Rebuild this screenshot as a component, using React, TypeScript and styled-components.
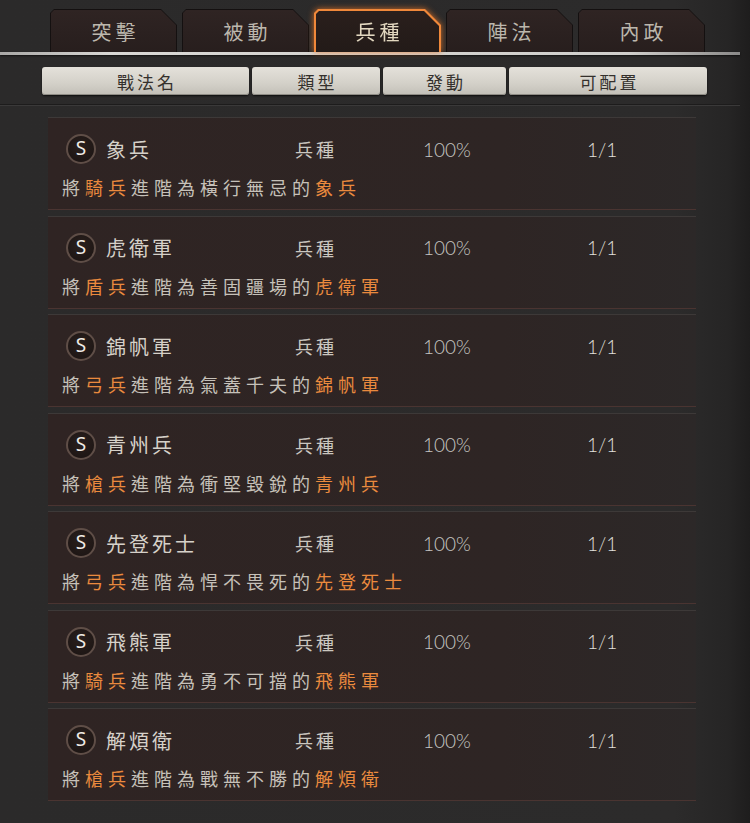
import React from 'react';
import styled, { createGlobalStyle } from 'styled-components';

type Part = { text: string; hl?: boolean };
type Skill = { name: string; desc: Part[] };

const skills: Skill[] = [
  { name: '象兵', desc: [{ text: '將' }, { text: '騎兵', hl: true }, { text: '進階為橫行無忌的' }, { text: '象兵', hl: true }] },
  { name: '虎衛軍', desc: [{ text: '將' }, { text: '盾兵', hl: true }, { text: '進階為善固疆場的' }, { text: '虎衛軍', hl: true }] },
  { name: '錦帆軍', desc: [{ text: '將' }, { text: '弓兵', hl: true }, { text: '進階為氣蓋千夫的' }, { text: '錦帆軍', hl: true }] },
  { name: '青州兵', desc: [{ text: '將' }, { text: '槍兵', hl: true }, { text: '進階為衝堅毀銳的' }, { text: '青州兵', hl: true }] },
  { name: '先登死士', desc: [{ text: '將' }, { text: '弓兵', hl: true }, { text: '進階為悍不畏死的' }, { text: '先登死士', hl: true }] },
  { name: '飛熊軍', desc: [{ text: '將' }, { text: '騎兵', hl: true }, { text: '進階為勇不可擋的' }, { text: '飛熊軍', hl: true }] },
  { name: '解煩衛', desc: [{ text: '將' }, { text: '槍兵', hl: true }, { text: '進階為戰無不勝的' }, { text: '解煩衛', hl: true }] },
];

const tabs = ['突擊', '被動', '兵種', '陣法', '內政'];
const columns = [
  { label: '戰法名', width: 207 },
  { label: '類型', width: 128 },
  { label: '發動', width: 123 },
  { label: '可配置', width: 198 },
];

const GlobalStyle = createGlobalStyle`
  html, body {
    margin: 0;
    padding: 0;
    background: #1f1e1e;
  }
  body {
    font-family: "Noto Sans CJK TC", "Noto Sans", sans-serif;
  }
`;

const Page = styled.div`
  width: 750px;
  height: 823px;
  overflow: hidden;
  background: linear-gradient(90deg, #2b2a2a 0%, #2c2b2b 90%, #262525 97%, #1e1d1d 100%);
`;

const TabBar = styled.div`
  display: flex;
  gap: 5px;
  padding: 9px 0 0 50px;
  height: 43px;
`;

const TabGlow = styled.div<{ $active?: boolean }>`
  width: 127px;
  height: 43px;
  filter: ${p => (p.$active ? 'drop-shadow(0 0 3px rgba(235, 120, 40, 0.85))' : 'none')};
`;

const TabEdge = styled.div<{ $active?: boolean }>`
  height: 100%;
  padding: ${p => (p.$active ? '2px 2px 0 2px' : '1px 1px 0 1px')};
  box-sizing: border-box;
  background: ${p => (p.$active ? '#f0883a' : '#141010')};
  clip-path: polygon(4px 0, calc(100% - 16px) 0, 100% 16px, 100% 100%, 0 100%, 0 4px);
`;

const TabFace = styled.div<{ $active?: boolean }>`
  height: 100%;
  display: flex;
  align-items: center;
  justify-content: center;
  background: ${p =>
    p.$active
      ? 'linear-gradient(180deg, #2a1f1c 0%, #221a18 100%)'
      : 'linear-gradient(180deg, #2f2423 0%, #271e1d 100%)'};
  clip-path: polygon(3px 0, calc(100% - 15px) 0, 100% 15px, 100% 100%, 0 100%, 0 3px);
  color: ${p => (p.$active ? '#e3d8c0' : '#bcb7ad')};
  font-size: 20px;
  letter-spacing: 4px;
  padding: 0 0 2px 4px;
`;

const TabLine = styled.div`
  width: 740px;
  height: 3px;
  background: linear-gradient(90deg, #a9a8a6 0%, #d9d8d5 15%, #d0cfcc 85%, #8a8988 100%);
  box-shadow: 0 1px 2px rgba(0, 0, 0, 0.6);
`;

const Header = styled.div`
  display: flex;
  gap: 3px;
  padding: 12px 0 0 42px;
`;

const HeadCell = styled.div<{ $w: number }>`
  width: ${p => p.$w}px;
  height: 28px;
  display: flex;
  align-items: center;
  justify-content: center;
  border-radius: 3px;
  background: linear-gradient(180deg, #e4e1da 0%, #d3d0c8 60%, #c2bfb7 100%);
  box-shadow: inset 0 -1px 0 #8e8b84, 0 1px 2px rgba(0, 0, 0, 0.7);
  color: #34302c;
  font-size: 17px;
  letter-spacing: 3px;
  padding-left: 3px;
  box-sizing: border-box;
`;

const HeadLine = styled.div`
  margin-top: 9px;
  width: 740px;
  height: 1px;
  background: #1d1c1c;
  box-shadow: 0 1px 0 #3a3939;
`;

const List = styled.div`
  display: flex;
  flex-direction: column;
  gap: 5.5px;
  padding: 12px 0 0 48px;
`;

const Row = styled.div`
  width: 648px;
  height: 93px;
  box-sizing: border-box;
  padding: 16px 0 0 0;
  border-top: 1px solid #3d3938;
  border-bottom: 1px solid #4a3431;
  background: linear-gradient(90deg, #2f2423 0%, #2e2524 70%, #2c2828 100%);
`;

const TopLine = styled.div`
  display: flex;
  align-items: center;
  height: 30px;
  padding-left: 18px;
`;

const Badge = styled.div`
  width: 30px;
  height: 30px;
  border-radius: 50%;
  box-sizing: border-box;
  border: 2px solid #5f4e47;
  background: radial-gradient(circle at 50% 40%, #2a201d 0%, #1a1312 100%);
  display: flex;
  align-items: center;
  justify-content: center;
  color: #f0ece6;
  font-family: "Noto Sans", sans-serif;
  font-size: 19px;
  line-height: 1;
  padding-bottom: 1px;
`;

const Name = styled.div`
  width: 189px;
  margin-left: 10px;
  color: #d6d1c9;
  font-size: 20px;
  letter-spacing: 3px;
`;

const Type = styled.div`
  width: 128px;
  color: #cbc7c0;
  font-size: 18px;
  letter-spacing: 3px;
`;

const Rate = styled.div`
  width: 164px;
  color: #c6c5c3;
  font-family: Lato, "Noto Sans", sans-serif;
  font-weight: 300;
  font-size: 19px;
`;

const Slot = styled.div`
  color: #e2e0dd;
  font-family: Lato, "Noto Sans", sans-serif;
  font-weight: 300;
  font-size: 19px;
`;

const Desc = styled.div`
  margin-top: 11px;
  padding-left: 14px;
  height: 24px;
  line-height: 24px;
  font-size: 18px;
  letter-spacing: 5px;
  color: #c6c1b9;
`;

const Hl = styled.span`
  color: #ea8a3e;
`;

export default function App() {
  return (
    <Page>
      <GlobalStyle />
      <TabBar>
        {tabs.map(t => (
          <TabGlow key={t} $active={t === '兵種'}>
            <TabEdge $active={t === '兵種'}>
              <TabFace $active={t === '兵種'}>{t}</TabFace>
            </TabEdge>
          </TabGlow>
        ))}
      </TabBar>
      <TabLine />
      <Header>
        {columns.map(c => (
          <HeadCell key={c.label} $w={c.width}>
            {c.label}
          </HeadCell>
        ))}
      </Header>
      <HeadLine />
      <List>
        {skills.map(s => (
          <Row key={s.name}>
            <TopLine>
              <Badge>S</Badge>
              <Name>{s.name}</Name>
              <Type>兵種</Type>
              <Rate>100%</Rate>
              <Slot>1/1</Slot>
            </TopLine>
            <Desc>
              {s.desc.map((p, i) => (p.hl ? <Hl key={i}>{p.text}</Hl> : <span key={i}>{p.text}</span>))}
            </Desc>
          </Row>
        ))}
      </List>
    </Page>
  );
}
